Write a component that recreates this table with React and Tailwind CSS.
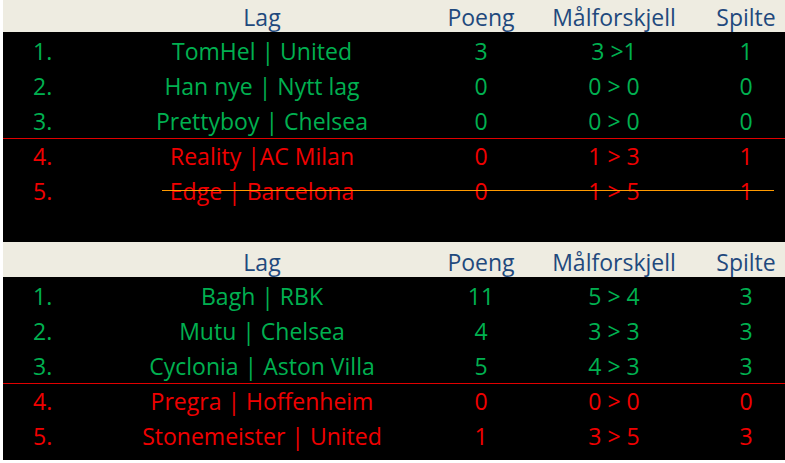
const table1 = [
  { n: '1.', lag: 'TomHel | United', p: '3', m: '3 >1', s: '1', ok: true },
  { n: '2.', lag: 'Han nye | Nytt lag', p: '0', m: '0 > 0', s: '0', ok: true },
  { n: '3.', lag: 'Prettyboy | Chelsea', p: '0', m: '0 > 0', s: '0', ok: true, line: true },
  { n: '4.', lag: 'Reality |AC Milan', p: '0', m: '1 > 3', s: '1' },
  { n: '5.', lag: 'Edge | Barcelona', p: '0', m: '1 > 5', s: '1', strike: true },
];

const table2 = [
  { n: '1.', lag: 'Bagh | RBK', p: '11', m: '5 > 4', s: '3', ok: true },
  { n: '2.', lag: 'Mutu | Chelsea', p: '4', m: '3 > 3', s: '3', ok: true },
  { n: '3.', lag: 'Cyclonia | Aston Villa', p: '5', m: '4 > 3', s: '3', ok: true, line: true },
  { n: '4.', lag: 'Pregra | Hoffenheim', p: '0', m: '0 > 0', s: '0' },
  { n: '5.', lag: 'Stonemeister | United', p: '1', m: '3 > 5', s: '3' },
];

const cols = 'grid grid-cols-[97px_324px_114px_152px_95px]';

function Header({ tall }) {
  return (
    <div className={`${cols} bg-[#eeece1] text-[#1f497d] ${tall ? 'h-[35px] pt-[5px]' : 'h-[32px] pt-[2px]'} items-center`}>
      <div />
      <div className="text-center">Lag</div>
      <div className="text-center">Poeng</div>
      <div className="text-center">Målforskjell</div>
      <div className="text-center pl-[17px]">Spilte</div>
    </div>
  );
}

function Row({ r }) {
  const color = r.ok ? 'text-[#00b050]' : 'text-[#f00000]';
  return (
    <>
      <div className={`${cols} relative items-center ${color} ${r.line ? 'h-[34px]' : 'h-[35px]'}`}>
        <div className="pl-[30px]">{r.n}</div>
        <div className="text-center">{r.lag}</div>
        <div className="text-center">{r.p}</div>
        <div className="text-center">{r.m}</div>
        <div className="text-center pl-[17px]">{r.s}</div>
        {r.strike && <div className="absolute left-[159px] w-[612px] top-[16px] h-px bg-[#ff9a00]" />}
      </div>
      {r.line && <div className="h-px bg-[#e00000]" />}
    </>
  );
}

export default function App() {
  return (
    <div className="w-[785px] h-[463px] bg-white pl-[3px] font-['Open_Sans',sans-serif] font-medium text-[23px] leading-none overflow-hidden">
      <Header />
      <div className="bg-black pt-[2px] pb-[33px]">
        {table1.map(r => <Row key={r.n} r={r} />)}
      </div>
      <Header tall />
      <div className="bg-black pt-[2px] pb-[6px]">
        {table2.map(r => <Row key={r.n} r={r} />)}
      </div>
    </div>
  );
}
